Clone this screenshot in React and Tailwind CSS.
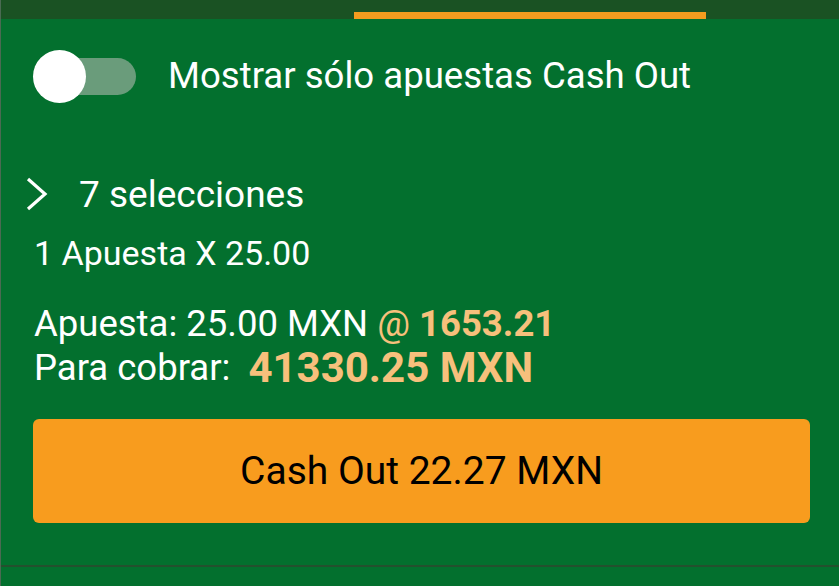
export default function App() {
  return (
    <div className="w-[839px] h-[586px] bg-[#03702e] text-white overflow-hidden flex flex-col border-l border-[#4a6a52]" style={{ fontFamily: 'Roboto, "Noto Sans", sans-serif' }}>
      {/* Tabs strip */}
      <div className="h-[19px] bg-[#1a5223] flex shrink-0">
        <div className="w-[353px]" />
        <div className="w-[352px] flex flex-col justify-end">
          <div className="h-[7px] bg-[#f39c1f]" />
        </div>
      </div>

      {/* Toggle */}
      <div className="flex items-center h-[118px] pl-[32px] pb-[3px] shrink-0">
        <div className="relative w-[103px] h-[53px] flex items-center">
          <div className="absolute left-[10px] right-0 h-[37px] rounded-full bg-[#6a9c7b]" />
          <div className="relative w-[53px] h-[53px] rounded-full bg-white" />
        </div>
        <span className="ml-[32px] text-[36.6px] leading-none">Mostrar sólo apuestas Cash Out</span>
      </div>

      {/* Bet info */}
      <div className="px-[33px] pt-[37px] shrink-0">
        <div className="flex items-center -ml-[10px] h-[40px]">
          <svg width="24" height="34" viewBox="0 0 24 34" className="mr-[31px]">
            <path d="M4 2 L21 17 L4 32" fill="none" stroke="white" strokeWidth="3.2" />
          </svg>
          <span className="text-[37px] leading-none">7 selecciones</span>
        </div>
        <div className="mt-[19px] h-[40px] flex items-center text-[34px] leading-none">1 Apuesta X 25.00</div>
        <div className="mt-[29px] h-[44px] flex items-center text-[36.5px] leading-none whitespace-nowrap">
          Apuesta: 25.00 MXN&nbsp;<span className="text-[#f7c07c]">@ <span className="font-bold">1653.21</span></span>
        </div>
        <div className="h-[44px] flex items-center text-[36.5px] leading-none whitespace-nowrap">
          <span>Para cobrar:</span>
          <span className="ml-[18px] text-[42px] font-bold text-[#f7c07c]">41330.25 MXN</span>
        </div>
      </div>

      {/* Cash out button */}
      <div className="pl-[32px] pr-[29px] mt-[29px] shrink-0">
        <button className="w-full h-[104px] rounded-[6px] bg-[#f89c1e] text-black text-[39px] leading-none flex items-center justify-center">
          Cash Out 22.27 MXN
        </button>
      </div>

      <div className="mt-[42px] h-[2px] bg-[#24502e] shrink-0" />
    </div>
  );
}
